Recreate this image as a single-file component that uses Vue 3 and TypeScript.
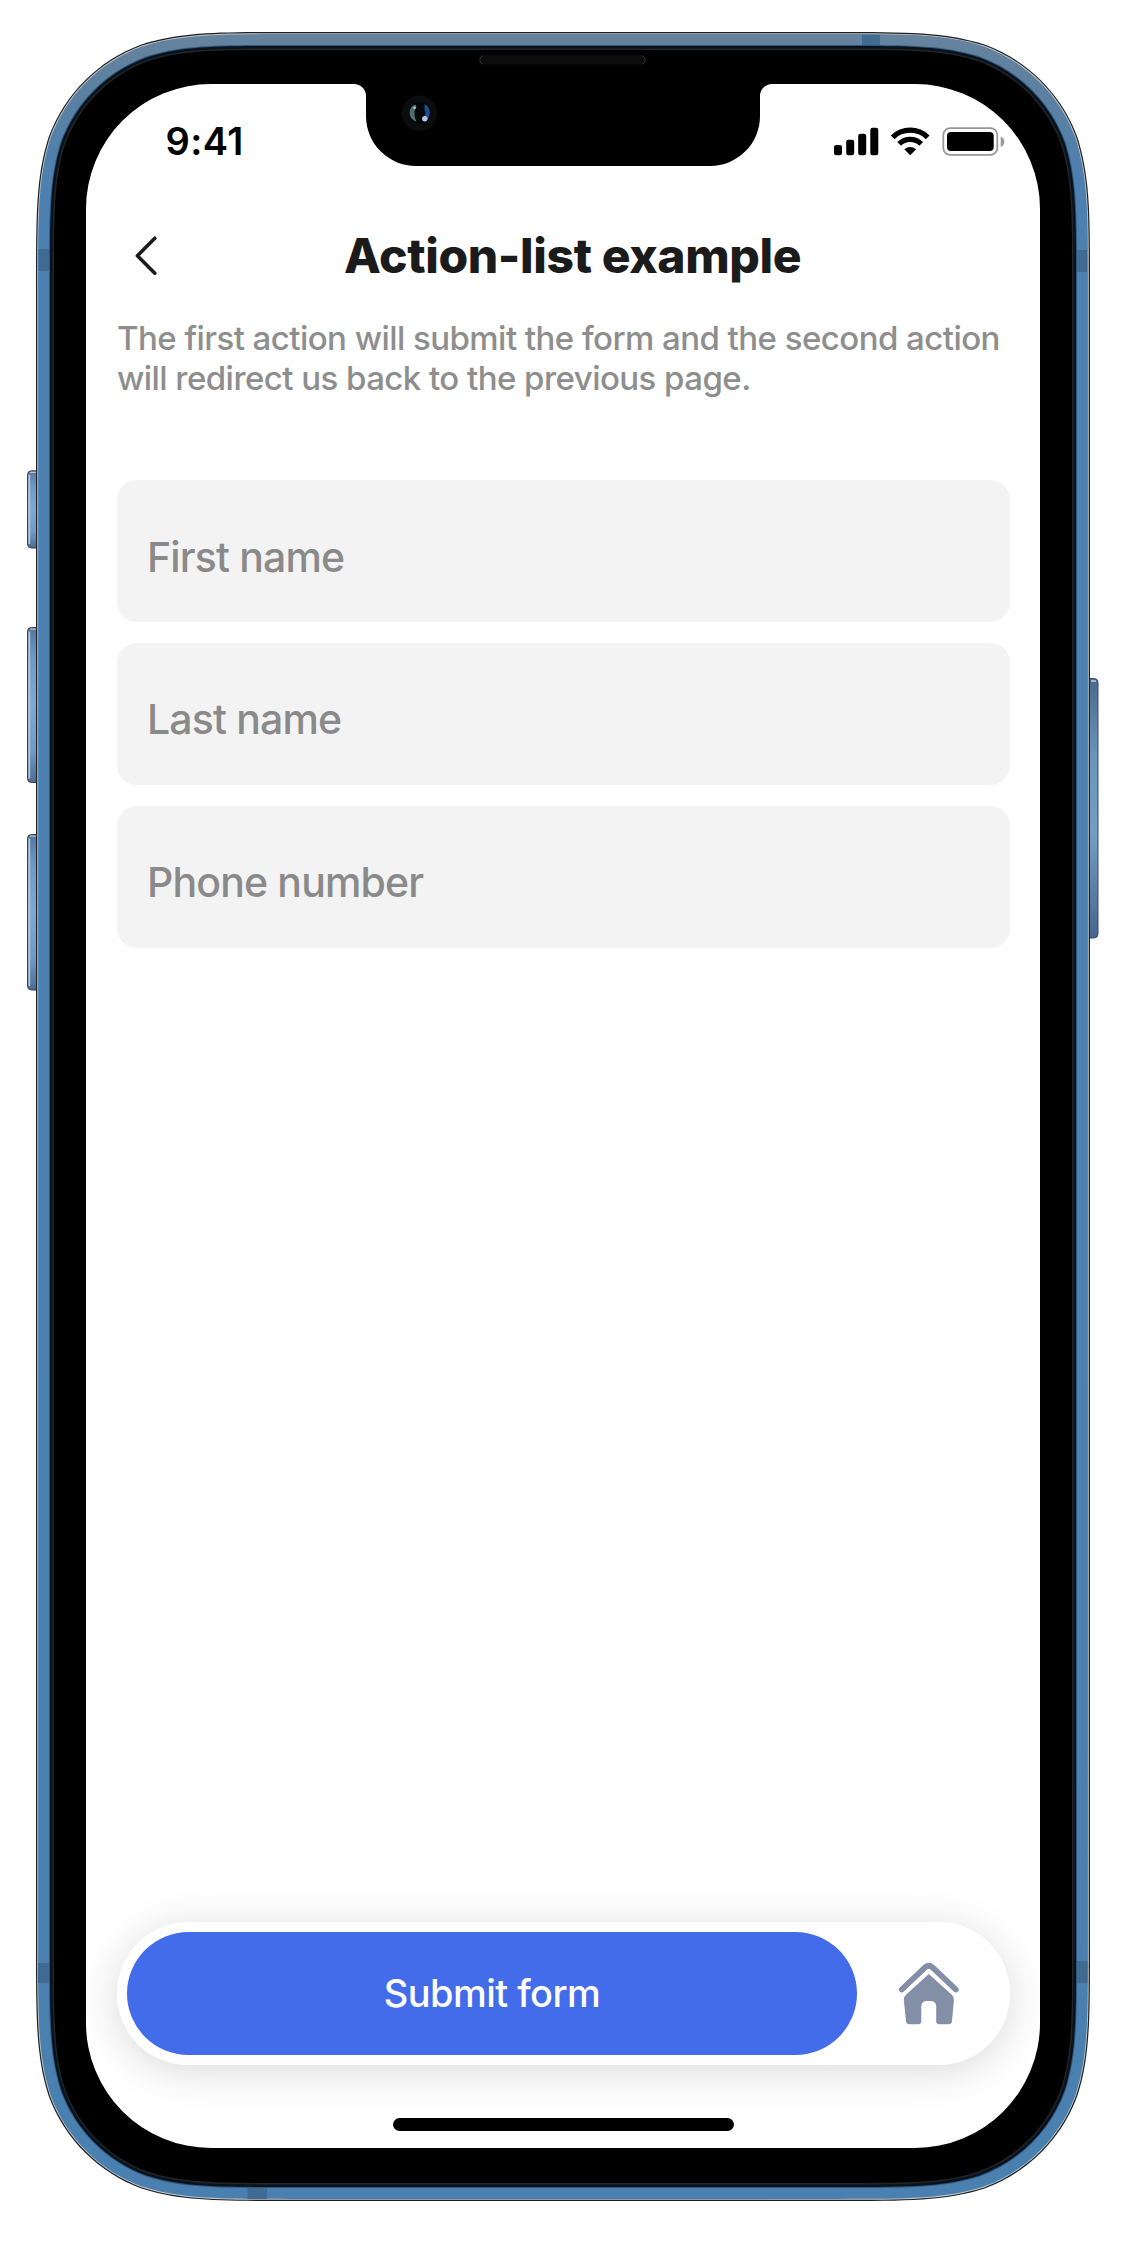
<script setup lang="ts">
import { ref } from 'vue'

interface Field {
  id: string
  label: string
}

interface Rect {
  x: number
  y: number
  width: number
  height: number
}

const fields: Field[] = [
  { id: 'first-name', label: 'First name' },
  { id: 'last-name', label: 'Last name' },
  { id: 'phone', label: 'Phone number' },
]

const values = ref<Record<string, string>>({})

const body: Rect = { x: 36, y: 32, width: 1054, height: 2169 }
const bodyRadius = 167

// Rounded rectangle with continuous-curvature corners, inset from the device body.
function shell(inset: number): string {
  const r = bodyRadius - inset
  const l = body.x + inset
  const t = body.y + inset
  const rt = body.x + body.width - inset
  const b = body.y + body.height - inset
  const [e, c1, c2, p, q, m, n] = [1.528, 1.0884, 0.8684, 0.6314, 0.0749, 0.3728, 0.169].map((k) => k * r)
  return [
    `M${l + e} ${t}H${rt - e}`,
    `C${rt - c1} ${t} ${rt - c2} ${t} ${rt - p} ${t + q}`,
    `C${rt - m} ${t + n} ${rt - n} ${t + m} ${rt - q} ${t + p}`,
    `C${rt} ${t + c2} ${rt} ${t + c1} ${rt} ${t + e}`,
    `V${b - e}`,
    `C${rt} ${b - c1} ${rt} ${b - c2} ${rt - q} ${b - p}`,
    `C${rt - n} ${b - m} ${rt - m} ${b - n} ${rt - p} ${b - q}`,
    `C${rt - c2} ${b} ${rt - c1} ${b} ${rt - e} ${b}`,
    `H${l + e}`,
    `C${l + c1} ${b} ${l + c2} ${b} ${l + p} ${b - q}`,
    `C${l + m} ${b - n} ${l + n} ${b - m} ${l + q} ${b - p}`,
    `C${l} ${b - c2} ${l} ${b - c1} ${l} ${b - e}`,
    `V${t + e}`,
    `C${l} ${t + c1} ${l} ${t + c2} ${l + q} ${t + p}`,
    `C${l + n} ${t + m} ${l + m} ${t + n} ${l + p} ${t + q}`,
    `C${l + c2} ${t} ${l + c1} ${t} ${l + e} ${t}Z`,
  ].join('')
}

const leftKeys: Rect[] = [
  { x: 27.5, y: 470.8, width: 14, height: 77.2 },
  { x: 27.5, y: 627.5, width: 14, height: 155 },
  { x: 27.5, y: 834.5, width: 14, height: 155.5 },
]

const antennas: Rect[] = [
  { x: 38.5, y: 249, width: 11.5, height: 22 },
  { x: 1075.5, y: 250, width: 11.5, height: 22 },
  { x: 38, y: 1963, width: 12, height: 20 },
  { x: 1076, y: 1961, width: 11.5, height: 22 },
  { x: 862, y: 35, width: 18, height: 11.5 },
  { x: 247.5, y: 2188, width: 19.5, height: 11 },
]
</script>

<template>
  <div class="page">
    <svg class="device" viewBox="0 0 1128 2243" aria-hidden="true">
      <defs>
        <linearGradient id="rim" x1="0" y1="32" x2="0" y2="2201" gradientUnits="userSpaceOnUse">
          <stop offset="0" stop-color="#66839d" />
          <stop offset="0.02" stop-color="#5f819f" />
          <stop offset="0.07" stop-color="#4c80b0" />
          <stop offset="1" stop-color="#4a80b0" />
        </linearGradient>
        <linearGradient id="key" x1="0" y1="0" x2="0" y2="1">
          <stop offset="0" stop-color="#54779d" />
          <stop offset="0.2" stop-color="#6f9ac3" />
          <stop offset="0.5" stop-color="#7eaad0" />
          <stop offset="0.8" stop-color="#6f9ac3" />
          <stop offset="1" stop-color="#4d6a90" />
        </linearGradient>
        <linearGradient id="keyRight" x1="0" y1="0" x2="0" y2="1">
          <stop offset="0" stop-color="#486a8c" />
          <stop offset="0.3" stop-color="#6a94ba" />
          <stop offset="0.6" stop-color="#739ec4" />
          <stop offset="1" stop-color="#45658c" />
        </linearGradient>
      </defs>

      <g v-for="key in leftKeys" :key="key.y">
        <rect v-bind="key" rx="4" fill="url(#key)" stroke="#39404f" />
        <path :d="`M29.3 ${key.y + 4}V${key.y + key.height - 4}`" stroke="#b6c2d6" stroke-width="1.8" />
        <path :d="`M30 ${key.y + 1.6}H36`" stroke="#b6c2d6" stroke-width="1.2" />
      </g>
      <rect x="1084" y="678.5" width="14" height="259.5" rx="4" fill="url(#keyRight)" stroke="#3d4b66" />
      <path d="M1091 681H1096" stroke="#a3b0cf" stroke-width="2" />

      <path :d="shell(0)" fill="#1d1f22" />
      <path :d="shell(1.2)" fill="#c3c7ca" />
      <path :d="shell(2.1)" fill="url(#rim)" />
      <rect v-for="(band, i) in antennas" :key="i" v-bind="band" fill="#3f6b93" />
      <path :d="shell(13)" fill="#2f5577" />
      <path :d="shell(14)" fill="#06121e" />
      <path :d="shell(16.5)" fill="#232425" />
      <path :d="shell(18)" fill="#000" />

      <path
        fill="#fff"
        d="M211 84H354A12 12 0 0 1 366 96V116A50 50 0 0 0 416 166H710A50 50 0 0 0 760 116V96A12 12 0 0 1 772 84H915A125 125 0 0 1 1040 209V2023A125 125 0 0 1 915 2148H211A125 125 0 0 1 86 2023V209A125 125 0 0 1 211 84Z"
      />

      <rect x="479.5" y="55.3" width="166" height="9.2" rx="4.6" fill="#0c0c0c" />
      <path d="M483 55.6A4.5 4.5 0 0 0 483 64.2M642 55.6A4.5 4.5 0 0 1 642 64.2" fill="none" stroke="#303030" />
      <circle cx="419.5" cy="113.3" r="17.8" fill="#0b0c0d" />
      <circle cx="419.5" cy="113" r="11" fill="#050607" />
      <path d="M415.5 104.5C407.5 107 407.5 119 416.5 121.5C414 116 413.5 110 416.5 107Z" fill="#4b706c" />
      <path d="M424.5 104C431.5 107 431 117 426.5 120.5C422 119 427.5 113 424.5 110Z" fill="#1c4f91" />
      <circle cx="424.8" cy="118.8" r="2.7" fill="#bcc5ea" />
      <circle cx="414.6" cy="107.8" r="1.4" fill="#a8bfba" />
    </svg>

    <main class="screen">
      <div class="status">
        <span class="time">9:41</span>
        <svg class="status-icons" width="172" height="30" viewBox="833 126 172 30" aria-hidden="true">
          <rect x="834" y="145" width="8" height="10.3" rx="2.2" />
          <rect x="846.2" y="139.7" width="8" height="15.6" rx="2.2" />
          <rect x="858.2" y="133.8" width="8" height="21.5" rx="2.2" />
          <rect x="870.3" y="127.8" width="8" height="27.5" rx="2.2" />
          <g fill="none" stroke="#000" stroke-width="5.3">
            <path d="M892.7 137.3A25 25 0 0 1 927.7 137.3" />
            <path d="M899.2 143.9A15.8 15.8 0 0 1 921.2 143.9" />
          </g>
          <path d="M910.2 155.2L904.3 149.3Q910.2 144.6 916.1 149.3Z" />
          <rect x="943.3" y="128.1" width="54" height="26.8" rx="7" fill="none" stroke="#979797" stroke-width="1.7" />
          <rect x="947" y="132" width="46.7" height="19" rx="4" />
          <path d="M1000.7 136.5Q1004.3 138 1004.3 141.8T1000.7 147Z" fill="#999" />
        </svg>
      </div>

      <header class="header">
        <button class="back" type="button" aria-label="Back">
          <svg width="24" height="42" viewBox="0 0 24 42">
            <path d="M20.8 3.2L3.4 20.8L20.8 38.2" fill="none" stroke="#1b1b1b" stroke-width="3.6" stroke-linecap="round" stroke-linejoin="round" />
          </svg>
        </button>
        <h1 class="title">Action-list example</h1>
      </header>

      <p class="intro">The first action will submit the form and the second action<br />will redirect us back to the previous page.</p>

      <form class="form" @submit.prevent>
        <input
          v-for="field in fields"
          :key="field.id"
          v-model="values[field.id]"
          class="field"
          type="text"
          :placeholder="field.label"
          :aria-label="field.label"
        />
      </form>

      <nav class="actions">
        <button class="submit" type="button"><span>Submit form</span></button>
        <button class="home" type="button" aria-label="Home">
          <svg width="62" height="64" viewBox="898 1961 62 64">
            <path d="M901.8 1989.5L925.4 1967.2Q928.8 1964.2 932.2 1967.2L955.8 1989.5" fill="none" stroke="#838fa7" stroke-width="5.8" stroke-linecap="round" stroke-linejoin="round" />
            <path
              fill="#838fa7"
              d="M928.8 1974L951.5 1994.6Q954.2 1997 953.9 2000L952 2021Q951.7 2024.3 948.5 2024.3H939.5Q936.2 2024.3 936.2 2021V2006.5Q936.2 2001 930.5 2001H927Q921.3 2001 921.3 2006.5V2021Q921.3 2024.3 918 2024.3H909.5Q906.3 2024.3 906 2021L903.8 2000Q903.5 1997 906.2 1994.6Z"
            />
          </svg>
        </button>
      </nav>

      <div class="home-indicator"></div>
    </main>
  </div>
</template>

<style>
body {
  margin: 0;
  background: #fff;
}
</style>

<style scoped>
.page {
  position: relative;
  box-sizing: border-box;
  width: 1128px;
  height: 2243px;
  padding: 84px 88px 95px 86px;
  overflow: hidden;
  font-family: Inter, 'Liberation Sans', sans-serif;
}

.device {
  position: absolute;
  inset: 0;
  width: 1128px;
  height: 2243px;
}

.screen {
  position: relative;
  box-sizing: border-box;
  display: flex;
  flex-direction: column;
  width: 954px;
  height: 2064px;
  padding: 42px 30.5px 17px 31px;
  border-radius: 125px;
  overflow: hidden;
}

button {
  padding: 0;
  border: 0;
  background: none;
  font: inherit;
}

.status {
  display: flex;
  justify-content: space-between;
  height: 30px;
  padding: 0 4.5px 0 48.5px;
}

.time {
  font-size: 38px;
  font-weight: 600;
  line-height: 31px;
  letter-spacing: 0.4px;
}

.status-icons {
  flex: none;
}

.header {
  display: flex;
  align-items: center;
  height: 60px;
  margin-top: 70px;
}

.back {
  display: flex;
  width: 24px;
  margin-left: 17px;
  flex: none;
}

.title {
  margin: 0 0 0 186px;
  color: #1b1b1b;
  font-size: 48px;
  font-weight: 800;
  line-height: 60px;
  letter-spacing: -0.37px;
  white-space: nowrap;
}

.intro {
  margin: 32px 0 0;
  color: #8e8e8e;
  font-size: 33px;
  font-weight: 500;
  line-height: 40px;
  letter-spacing: -0.55px;
  white-space: nowrap;
}

.form {
  display: flex;
  flex-direction: column;
  gap: 20.5px;
  margin-top: 82px;
}

.field {
  box-sizing: border-box;
  width: 100%;
  height: 142.3px;
  padding: 11px 30px 0;
  border: 0;
  border-radius: 20px;
  outline: 0;
  background: #f3f3f3;
  font-family: inherit;
  font-size: 41px;
  font-weight: 500;
  letter-spacing: -0.85px;
}

.field::placeholder {
  color: #8a8a8a;
  opacity: 1;
}

.actions {
  display: flex;
  align-items: center;
  box-sizing: border-box;
  height: 142.5px;
  margin-top: auto;
  padding: 0 49.5px 0 10px;
  border-radius: 71px;
  background: #fff;
  box-shadow: 0 6px 42px rgba(0, 0, 0, 0.15);
}

.submit {
  width: 730px;
  height: 122.5px;
  border-radius: 62px;
  background: #426ce9;
  color: #fff;
  font-size: 38px;
  font-weight: 500;
  letter-spacing: -0.55px;
}

.home {
  display: flex;
  margin-left: auto;
}

.home-indicator {
  width: 341px;
  height: 13px;
  margin: 53.5px 0 0 276px;
  border-radius: 7px;
  background: #000;
}
</style>
